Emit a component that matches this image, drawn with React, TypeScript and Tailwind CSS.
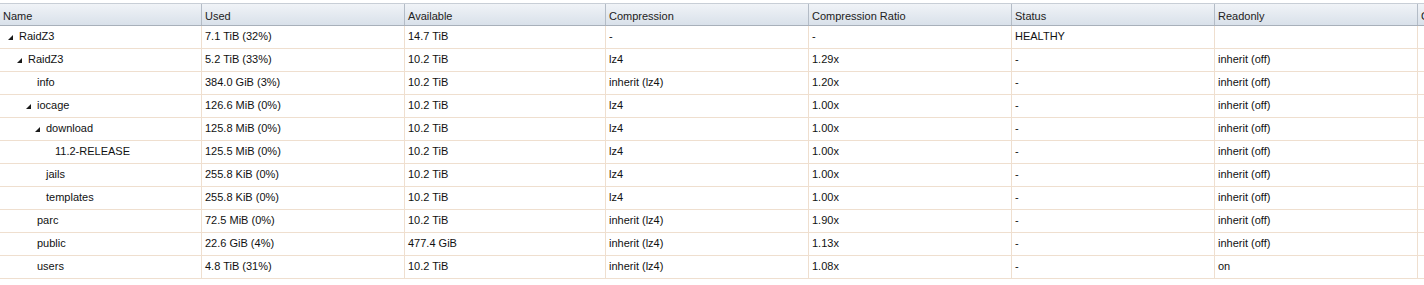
import React from "react";

type Row = {
  name: string;
  level: number;
  open?: boolean;
  used: string;
  avail: string;
  comp: string;
  ratio: string;
  status: string;
  ro: string;
};

const rows: Row[] = [
  { name: "RaidZ3", level: 0, open: true, used: "7.1 TiB (32%)", avail: "14.7 TiB", comp: "-", ratio: "-", status: "HEALTHY", ro: "" },
  { name: "RaidZ3", level: 1, open: true, used: "5.2 TiB (33%)", avail: "10.2 TiB", comp: "lz4", ratio: "1.29x", status: "-", ro: "inherit (off)" },
  { name: "info", level: 2, used: "384.0 GiB (3%)", avail: "10.2 TiB", comp: "inherit (lz4)", ratio: "1.20x", status: "-", ro: "inherit (off)" },
  { name: "iocage", level: 2, open: true, used: "126.6 MiB (0%)", avail: "10.2 TiB", comp: "lz4", ratio: "1.00x", status: "-", ro: "inherit (off)" },
  { name: "download", level: 3, open: true, used: "125.8 MiB (0%)", avail: "10.2 TiB", comp: "lz4", ratio: "1.00x", status: "-", ro: "inherit (off)" },
  { name: "11.2-RELEASE", level: 4, used: "125.5 MiB (0%)", avail: "10.2 TiB", comp: "lz4", ratio: "1.00x", status: "-", ro: "inherit (off)" },
  { name: "jails", level: 3, used: "255.8 KiB (0%)", avail: "10.2 TiB", comp: "lz4", ratio: "1.00x", status: "-", ro: "inherit (off)" },
  { name: "templates", level: 3, used: "255.8 KiB (0%)", avail: "10.2 TiB", comp: "lz4", ratio: "1.00x", status: "-", ro: "inherit (off)" },
  { name: "parc", level: 2, used: "72.5 MiB (0%)", avail: "10.2 TiB", comp: "inherit (lz4)", ratio: "1.90x", status: "-", ro: "inherit (off)" },
  { name: "public", level: 2, used: "22.6 GiB (4%)", avail: "477.4 GiB", comp: "inherit (lz4)", ratio: "1.13x", status: "-", ro: "inherit (off)" },
  { name: "users", level: 2, used: "4.8 TiB (31%)", avail: "10.2 TiB", comp: "inherit (lz4)", ratio: "1.08x", status: "-", ro: "on" },
];

// column widths incl. the 1px right border
const cols = ["w-[202px]", "w-[203px]", "w-[201px]", "w-[203px]", "w-[203px]", "w-[203px]", "w-[203px]", "w-[120px]"];
const heads = ["Name", "Used", "Available", "Compression", "Compression Ratio", "Status", "Readonly", "Comments"];
const indent = ["pl-[8px]", "pl-[17px]", "pl-[26px]", "pl-[35px]", "pl-[44px]"];

function Caret() {
  return (
    <svg width="5" height="5" viewBox="0 0 5 5" className="mr-[6px] mt-[3px] shrink-0">
      <polygon points="5,0 5,5 0,5" fill="#1a1a1a" />
    </svg>
  );
}

export default function App() {
  return (
    <div className="h-[285px] w-[1424px] overflow-hidden bg-white pt-[3px] font-['Liberation_Sans',Arial,sans-serif] text-[11px] text-[#111]">
      <div className="flex h-[23px] border-y border-t-[#c8ced6] border-b-[#a8b0ba] bg-gradient-to-b from-[#f0f3f7] to-[#d9e1ea] text-[#222]">
        {heads.map((h, i) => (
          <div key={h} className={`${cols[i]} flex shrink-0 items-center border-r border-[#b4bcc6] pl-[3px] pt-[3px] whitespace-nowrap`}>
            {h}
          </div>
        ))}
      </div>
      {rows.map((r, ri) => (
        <div key={ri} className="flex h-[23px] border-b border-[#efdfcf]">
          <div className={`${cols[0]} ${indent[r.level]} flex shrink-0 items-center border-r border-[#efdfcf] pb-[2px] whitespace-nowrap`}>
            {r.open ? <Caret /> : <span className="w-[11px] shrink-0" />}
            {r.name}
          </div>
          {[r.used, r.avail, r.comp, r.ratio, r.status, r.ro, ""].map((v, i) => (
            <div key={i} className={`${cols[i + 1]} flex shrink-0 items-center border-r border-[#efdfcf] pb-[2px] pl-[3px] whitespace-nowrap`}>
              {v}
            </div>
          ))}
        </div>
      ))}
    </div>
  );
}
